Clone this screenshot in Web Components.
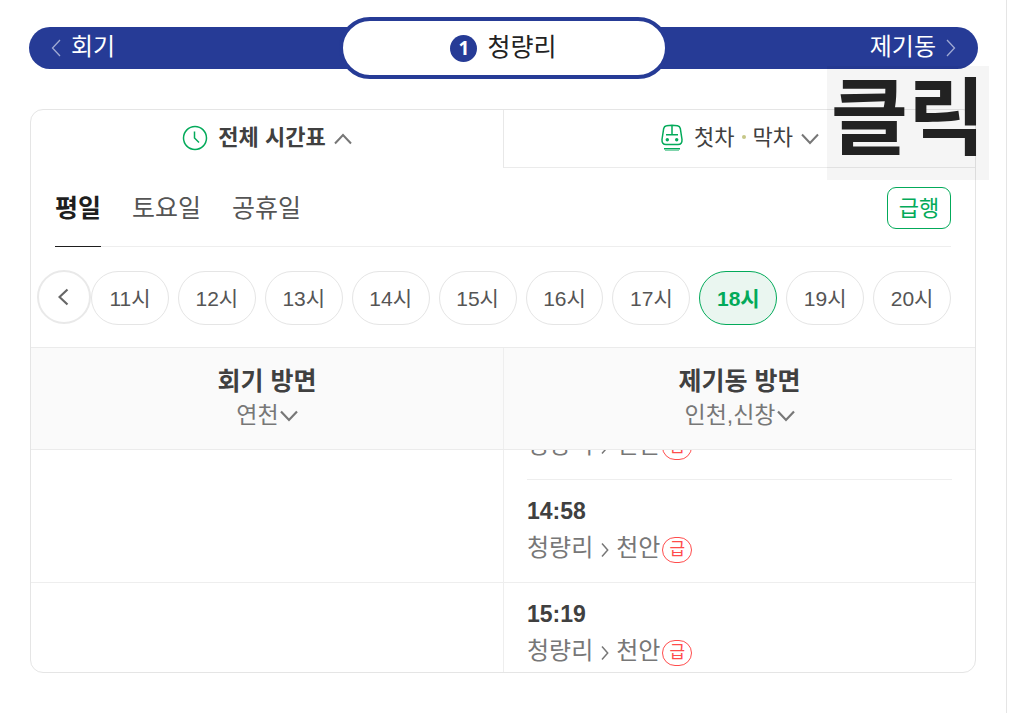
<!DOCTYPE html>
<html lang="ko">
<head>
<meta charset="utf-8">
<meta name="viewport" content="width=device-width, initial-scale=1">
<title>청량리 시간표</title>
<style>
body { margin: 0; background: #fff; color: #404040; font-family: "Liberation Sans", "Noto Sans CJK KR", sans-serif; }
</style>
</head>
<body>
<timetable-page></timetable-page>
<script>
const reset = `:host,*{box-sizing:border-box}
button{font:inherit;color:inherit;background:none;border:0;padding:0;margin:0;cursor:pointer;white-space:nowrap}
a{color:inherit;text-decoration:none;white-space:nowrap}
h2,p,ul{margin:0;padding:0;font-weight:inherit}ul{list-style:none}svg{display:block}`;

function define(name, css, html, setup) {
  const template = document.createElement('template');
  template.innerHTML = `<style>${reset}${css}</style>${html}`;
  customElements.define(name, class extends HTMLElement {
    connectedCallback() {
      if (this.shadowRoot) return;
      this.attachShadow({ mode: 'open' }).append(template.content.cloneNode(true));
      if (setup) setup(this);
    }
  });
}

define('chevron-icon',
  `:host{display:block;flex:none;width:18px}
   :host([dir=left]),:host([dir=right]){width:10px}
   svg{width:100%;fill:none;stroke:currentColor;stroke-width:var(--stroke,2)}`,
  '<svg aria-hidden="true"><path/></svg>',
  host => {
    const shapes = {
      up: ['0 0 18 12', 'M1 10.5 9 2l8 8.5'],
      down: ['0 0 18 12', 'M1 1.5 9 10l8-8.5'],
      left: ['0 0 10 18', 'M9 1 1.5 9 9 17'],
      right: ['0 0 10 18', 'M1 1l7.500 8L1 17']
    };
    const [box, d] = shapes[host.getAttribute('dir')];
    host.shadowRoot.querySelector('svg').setAttribute('viewBox', box);
    host.shadowRoot.querySelector('path').setAttribute('d', d);
  });

define('station-bar',
  `:host{display:grid;grid-template-columns:1fr 330px 1fr;align-items:center;color:#fff;font-size:24px;line-height:38px}
   .side{display:flex;align-items:center;gap:10px;height:42px;background:#263b96;padding:0 22px 2px}
   .side chevron-icon{--stroke:1.3;color:#a0aad3;margin-top:2px}
   .prev{border-radius:21px 0 0 21px;margin-right:-30px}
   .next{border-radius:0 21px 21px 0;margin-left:-30px;justify-content:flex-end}
   .now{position:relative;display:flex;justify-content:center;align-items:center;gap:10px;height:62px;padding-bottom:2px;border:4px solid #263b96;border-radius:31px;background:#fff;color:#222;font-size:25px}
   .line{display:grid;place-items:center;width:27px;height:27px;margin-top:2px;border-radius:50%;background:#263b96;color:#fff;font:bold 19px/27px "Noto Sans","Liberation Sans",sans-serif}`,
  `<a class="side prev" href="#hoegi"><chevron-icon dir="left"></chevron-icon><span>회기</span></a>
   <div class="now"><span class="line">1</span><span>청량리</span></div>
   <a class="side next" href="#jegidong"><span>제기동</span><chevron-icon dir="right"></chevron-icon></a>`);

define('view-tabs',
  `:host{display:grid;grid-template-columns:1fr 1fr;font-size:22px;line-height:30px}
   button{display:flex;justify-content:center;align-items:center;gap:10px;height:58px;padding-bottom:2px}
   .on{font-weight:bold}
   .off{border-left:1px solid #e8e8e8;border-bottom:1px solid #ebebeb}
   i{display:inline-block;width:4px;height:4px;margin:0 7px;border-radius:50%;background:#c6c787;vertical-align:6px}
   chevron-icon{color:#777;margin-left:-2px;margin-top:2px}
   svg{fill:none;stroke:#03aa5a;stroke-width:1.5}`,
  `<button class="on" type="button" aria-expanded="true">
     <svg width="26" height="26" viewBox="0 0 26 26" aria-hidden="true"><circle cx="13" cy="13" r="11.500"/><path d="M12.500 6.500v6.500l4.500 4.500"/></svg>
     <span>전체 시간표</span><chevron-icon dir="up"></chevron-icon></button>
   <button class="off" type="button" aria-expanded="false">
     <svg width="24" height="28" viewBox="0 0 24 28" aria-hidden="true"><path d="M6.500 1.800Q12 .8 17.500 1.800 19.800 2.200 20.300 4.500L22 15.500Q22.300 20.500 18 20.500H6Q1.700 20.500 2 15.500L3.700 4.500Q4.200 2.200 6.500 1.800M12 1.500v9.300M6 10.800h12M4 24.800h16"/><path d="M5 26.500h14" stroke="#81d4ac" stroke-width="1"/><g fill="#03aa5a" stroke="none"><circle cx="7.300" cy="15.800" r="1.700"/><circle cx="16.700" cy="15.800" r="1.700"/></g></svg>
     <span>첫차<i></i>막차</span><chevron-icon dir="down"></chevron-icon></button>`);

define('day-picker',
  `:host{display:flex;justify-content:space-between;align-items:flex-start;height:79px;margin:0 24px;border-bottom:1px solid #eee;font-size:25px;color:#555}
   .days{display:flex;gap:31px}
   .days button{height:79px;padding-top:2px;line-height:76px;border-bottom:1px solid transparent}
   .days .on{font-weight:bold;color:#1e1e1e;border-color:#1e1e1e}
   .express{width:64px;height:42px;margin-top:19px;border:1px solid #03aa5a;border-radius:9px;color:#03aa5a;font-size:22px;line-height:42px}`,
  `<div class="days"><button type="button" class="on" aria-pressed="true">평일</button><button type="button">토요일</button><button type="button">공휴일</button></div>
   <button type="button" class="express">급행</button>`);

define('hour-strip',
  `:host{display:flex;padding:24px 24px 22px 6px;font-size:21px;color:#555}
   .back{display:grid;place-items:center;flex:none;width:54px;height:54px;margin-top:-1px;border:2px solid #e9e9e9;border-radius:50%;background:#fff}
   .back svg{fill:none;stroke:#666;stroke-width:2.200}
   ul{display:flex;flex:1;gap:9px;min-width:0}
   li{flex:1}
   li button{width:100%;height:54px;border:1px solid #e5e5e5;border-radius:27px;line-height:54px}
   li .on{border-color:#03aa5a;background:#eaf6f0;color:#03aa5a;font-weight:bold}`,
  `<button class="back" type="button" aria-label="이전 시간"><svg width="12" height="18" viewBox="0 0 12 18" aria-hidden="true"><path d="M9.500 1.500 1.500 9l8 7.500"/></svg></button>
   <ul></ul>`,
  host => {
    const list = host.shadowRoot.querySelector('ul');
    for (let hour = 11; hour <= 20; hour++) {
      const item = document.createElement('li');
      const on = hour === 18;
      item.innerHTML = `<button type="button"${on ? ' class="on" aria-pressed="true"' : ''}>${hour}시</button>`;
      list.append(item);
    }
  });

define('direction-head',
  `:host{display:block;padding:16px 0 17px;background:#fafafa;text-align:center;line-height:34px}
   h2{font-size:25px;font-weight:bold}
   button{display:inline-flex;align-items:center;gap:1px;font-size:23px;line-height:34px;color:#777;vertical-align:top}
   chevron-icon{--stroke:2.200;margin-top:2px}`,
  `<h2><slot></slot></h2><button type="button"><slot name="ends"></slot><chevron-icon dir="down"></chevron-icon></button>`);

define('train-row',
  `:host{display:flex;flex-direction:column;justify-content:flex-end;height:103px;padding-bottom:14px;border-bottom:1px solid #eee;color:#777;font-size:24px}
   .time{font-size:23px;font-weight:bold;line-height:34px;color:#404040}
   .route{display:flex;align-items:center;line-height:40px}
   .route svg{margin:4px 7px 0 8px;fill:none;stroke:#777;stroke-width:1.500}
   .mark{width:30px;height:26px;margin:3px 0 0 2px;border:1px solid #ff4c4c;border-radius:13px;color:#ff4c4c;font-size:17px;line-height:24px;text-align:center}`,
  `<p class="time"><slot></slot></p>
   <p class="route"><span>청량리</span><svg width="8" height="16" viewBox="0 0 8 16" aria-hidden="true"><path d="M1 1.500 6.700 8 1 14.500"/></svg><span>천안</span><span class="mark">급</span></p>`);

define('train-list',
  `:host{display:block;height:222px;overflow-y:auto;scrollbar-width:none}
   .hour{display:grid;grid-template-columns:1fr 1fr;border-bottom:1px solid #eee}
   .trains{border-left:1px solid #eee;padding:0 23px}
   .trains train-row:last-child{border-bottom:0;height:102px}`,
  `<div class="hour"><div></div><div class="trains"><train-row></train-row><train-row>14:58</train-row></div></div>
   <div class="hour"><div></div><div class="trains"><train-row>15:19</train-row></div></div>`,
  host => { host.scrollTop = 73; });

define('timetable-card',
  `:host{display:block;border:1px solid #e5e5e5;border-radius:13px;overflow:hidden;background:#fff}
   .heads{display:grid;grid-template-columns:1fr 1fr;border:solid #ebebeb;border-width:1px 0}
   .heads>*+*{border-left:1px solid #eee}`,
  `<view-tabs></view-tabs><day-picker></day-picker><hour-strip></hour-strip>
   <div class="heads">
     <direction-head>회기 방면<span slot="ends">연천</span></direction-head>
     <direction-head>제기동 방면<span slot="ends">인천,신창</span></direction-head>
   </div>
   <train-list></train-list>`);

define('click-note',
  `:host{display:block;width:162px;height:114px;background:rgba(0,0,0,.04);color:#222;font-size:84px;font-weight:bold;line-height:106px;text-align:center;white-space:nowrap;pointer-events:none}`,
  '<slot></slot>');

define('timetable-page',
  `:host{display:block;min-height:100vh;margin-right:7px;padding:17px 30px 32px;border-right:1px solid #e5e5e5;position:relative}
   station-bar{margin:0 -2px 30px -1px}
   click-note{position:absolute;top:66px;right:17px}`,
  `<station-bar></station-bar><timetable-card></timetable-card><click-note>클릭</click-note>`);
</script>
</body>
</html>
